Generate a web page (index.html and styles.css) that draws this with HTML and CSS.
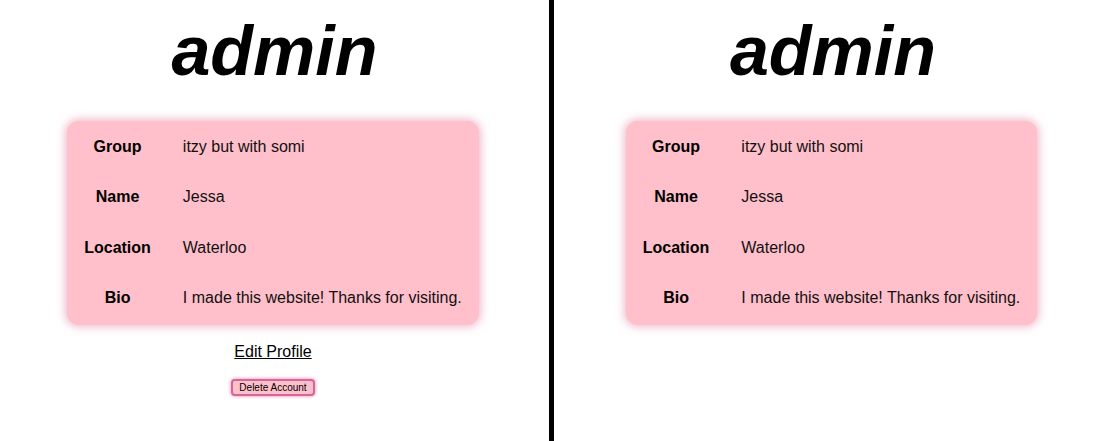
FILE: index.html
```html
<!DOCTYPE html>
<html>
<head>
<meta charset="utf-8">
<link rel="stylesheet" href="styles.css">
</head>
<body>
<div class="page">
  <section class="panel panel-left">
    <h1 class="title">admin</h1>
    <table class="card">
      <tr><th>Group</th><td>itzy but with somi</td></tr>
      <tr><th>Name</th><td>Jessa</td></tr>
      <tr><th>Location</th><td>Waterloo</td></tr>
      <tr><th>Bio</th><td>I made this website! Thanks for visiting.</td></tr>
    </table>
    <a class="edit" href="#">Edit Profile</a>
    <button class="delete" type="button">Delete Account</button>
  </section>
  <div class="divider"></div>
  <section class="panel panel-right">
    <h1 class="title">admin</h1>
    <table class="card">
      <tr><th>Group</th><td>itzy but with somi</td></tr>
      <tr><th>Name</th><td>Jessa</td></tr>
      <tr><th>Location</th><td>Waterloo</td></tr>
      <tr><th>Bio</th><td>I made this website! Thanks for visiting.</td></tr>
    </table>
  </section>
</div>
</body>
</html>
```

FILE: styles.css
```css
html, body {
  margin: 0;
  padding: 0;
  background: #fff;
}
body {
  font-family: "Liberation Sans", Arial, sans-serif;
  color: #000;
  font-size: 16px;
}
.page {
  display: grid;
  grid-template-columns: 549px 5px 1fr;
  height: 441px;
}
.panel {
  display: flex;
  flex-direction: column;
  align-items: center;
}
.panel-left {
  padding-right: 3px;
}
.panel-right {
  padding-right: 6px;
}
.divider {
  background: #000;
}
.title {
  margin: 11px 0 0;
  padding-left: 3px;
  font-size: 70px;
  line-height: 80px;
  font-weight: bold;
  font-style: italic;
}
.card {
  margin-top: 30px;
  background: pink;
  border-radius: 12px;
  border-spacing: 2px;
  box-shadow: 0 0 8px 2px rgba(226, 130, 160, 0.55);
}
.card th,
.card td {
  padding: 15px;
  font-size: 16px;
  line-height: 18.4px;
}
.card th {
  font-weight: bold;
  text-align: center;
}
.card td {
  text-align: left;
  color: #111;
}
.edit {
  margin-top: 18px;
  color: #000;
  font-size: 16px;
  line-height: 18px;
  text-decoration: underline;
}
.delete {
  margin-top: 18px;
  font-family: "Liberation Sans", Arial, sans-serif;
  font-size: 10px;
  line-height: 11px;
  padding: 1px 6px;
  background: pink;
  color: #000;
  border: 2px solid #d0689a;
  border-radius: 4px;
  box-shadow: 0 0 3px 1px rgba(240, 120, 170, 0.6);
}
```
